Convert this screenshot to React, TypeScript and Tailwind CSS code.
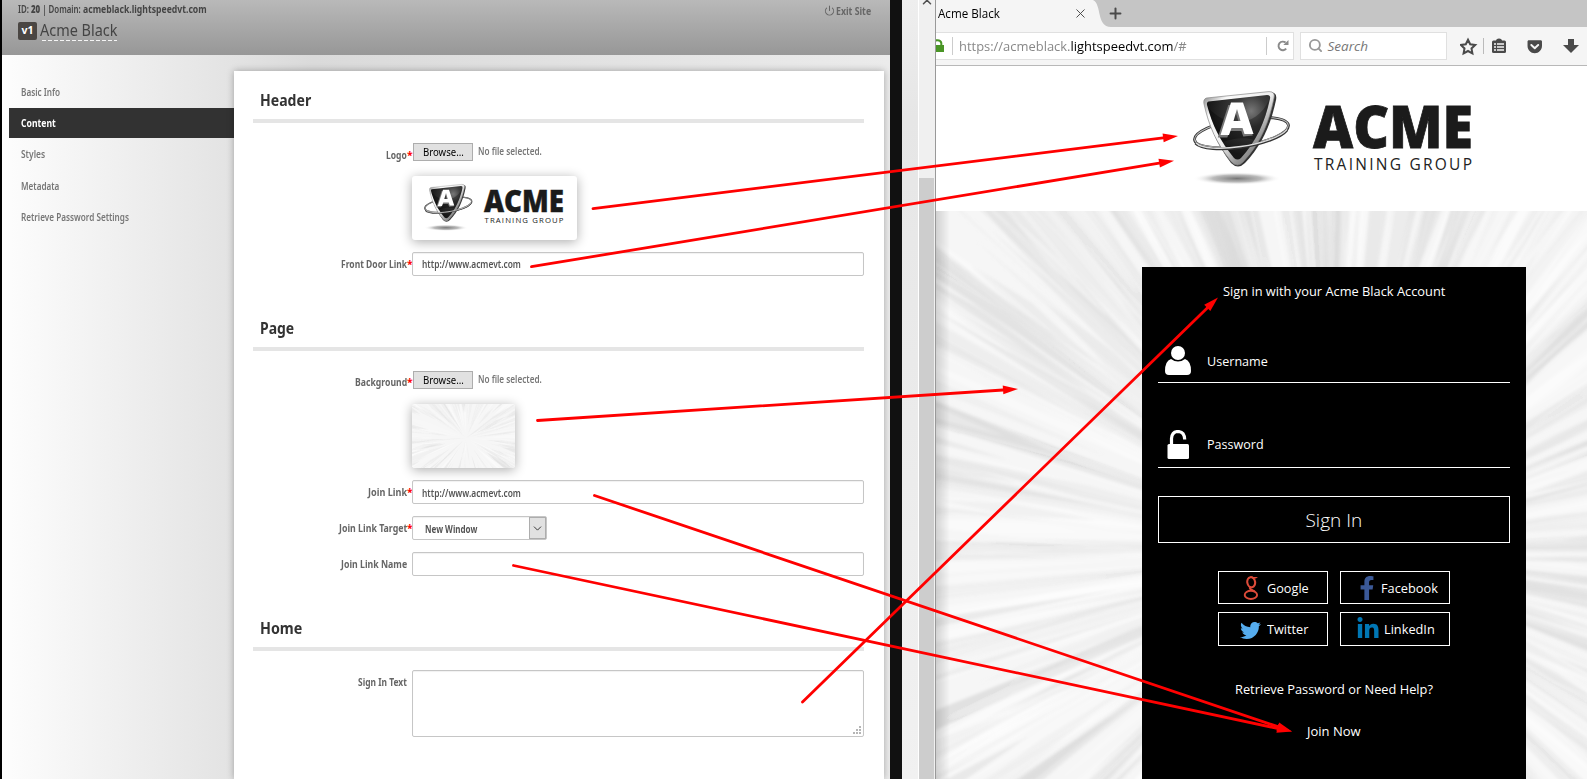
import { useLayoutEffect, useRef, useState, type ReactNode } from "react";
import { FaTwitter, FaFacebookF, FaLinkedinIn, FaGetPocket } from "react-icons/fa";
import { Power, Search, X, Plus, ChevronDown, ChevronUp } from "lucide-react";

/* Single line of text condensed or widened to an exact measure. */
function Fit({ w, className = "", children }: { w: number; className?: string; children: ReactNode }) {
  const ref = useRef<HTMLSpanElement>(null);
  const [k, setK] = useState(1);
  useLayoutEffect(() => {
    if (ref.current) setK(w / ref.current.offsetWidth);
  }, [w]);
  return (
    <span className={`inline-block whitespace-nowrap text-left ${className}`} style={{ width: w }}>
      <span ref={ref} className="inline-block origin-left" style={{ transform: `scaleX(${k})` }}>
        {children}
      </span>
    </span>
  );
}

function random(seed: number) {
  let s = seed;
  return () => {
    s = (s * 1664525 + 1013904223) % 4294967296;
    return s / 4294967296;
  };
}

const MAJOR: [number, number, number][] = [
  // angle (deg), width (deg), opacity
  [250, 6, 0.14], [256, 3, 0.08], [268.5, 5, 0.13], [262, 1.5, 0.06], [284, 3, 0.07], [293, 2, 0.06],
  [232, 3, 0.08], [225, 2, 0.08], [216, 3, 0.1], [209, 2, 0.06], [199, 3, 0.12], [190, 2, 0.07],
  [180, 3, 0.1], [174, 2, 0.06], [166, 1.5, 0.06], [157, 2.4, 0.12], [151, 2, 0.07], [143, 2, 0.09],
  [135, 4, 0.09], [306, 2, 0.07], [315, 4, 0.08], [328, 3, 0.07], [338, 3, 0.1], [346, 2, 0.09],
  [358, 3, 0.06], [10, 3, 0.09], [20, 3, 0.06], [32, 4, 0.06], [44, 3, 0.08], [55, 3, 0.07],
];

function Rays({ id, width, height, cx, cy, seed, fine }: {
  id: string; width: number; height: number; cx: number; cy: number; seed: number; fine?: boolean;
}) {
  const r = random(seed);
  const reach = Math.hypot(Math.max(cx, width - cx), Math.max(cy, height - cy)) + 20;
  const shapes: { d: string; dark: boolean; o: number }[] = [];
  const add = (deg: number, wd: number, r0: number, r1: number, dark: boolean, o: number) => {
    const a = (deg * Math.PI) / 180;
    const h = (wd * Math.PI) / 360;
    const p = (rad: number, an: number) => `${(cx + rad * Math.cos(an)).toFixed(1)} ${(cy + rad * Math.sin(an)).toFixed(1)}`;
    const m = r0 + (r1 - r0) * 0.55;
    shapes.push({ d: `M${p(r0, a)} L${p(m, a - h)} L${p(r1, a)} L${p(m, a + h)}Z`, dark, o });
  };
  const n = fine ? 260 : 620;
  for (let i = 0; i < n; i++) {
    const start = r() * reach * 0.7;
    const len = reach * (0.25 + r() * 0.6);
    add(r() * 360, fine ? 2 + r() * 5 : 0.5 + r() * 2.6, start, start + len, r() > 0.5, fine ? 0.1 + r() * 0.3 : 0.12 + r() * 0.34);
  }
  return (
    <svg width={width} height={height} className="block" aria-hidden>
      <defs>
        <filter id={id} x="0" y="0" width="100%" height="100%">
          <feGaussianBlur stdDeviation={fine ? 0.5 : 1.6} />
        </filter>
      </defs>
      <rect width={width} height={height} fill="#f6f6f6" />
      <g filter={`url(#${id})`}>
        {!fine && MAJOR.map(([deg, wd, o], i) => {
          const p = (rad: number, an: number) => `${cx + rad * Math.cos((an * Math.PI) / 180)} ${cy + rad * Math.sin((an * Math.PI) / 180)}`;
          return <path key={i} d={`M${cx} ${cy} L${p(reach, deg - wd / 2)} L${p(reach, deg + wd / 2)}Z`} fill="#000" opacity={o * 0.7} />;
        })}
        {shapes.map((s, i) => (
          <path key={i} d={s.d} fill={s.dark ? "#d8d8d8" : "#ffffff"} opacity={s.o} />
        ))}
      </g>
    </svg>
  );
}

function Logo({ id, className }: { id: string; className: string }) {
  return (
    <svg viewBox="0 0 290 110" className={className} role="img" aria-label="Acme Training Group">
      <defs>
        <linearGradient id={`${id}-rim`} x1="0" y1="0" x2="1" y2="1">
          <stop offset="0" stopColor="#777" />
          <stop offset=".2" stopColor="#fafafa" />
          <stop offset=".5" stopColor="#eee" />
          <stop offset=".7" stopColor="#999" />
          <stop offset="1" stopColor="#444" />
        </linearGradient>
        <radialGradient id={`${id}-face`} cx=".7" cy=".25" r=".7">
          <stop offset="0" stopColor="#777" />
          <stop offset=".35" stopColor="#3c3c3c" />
          <stop offset="1" stopColor="#161616" />
        </radialGradient>
        <radialGradient id={`${id}-shade`}>
          <stop offset="0" stopColor="#777" />
          <stop offset=".55" stopColor="#aaa" stopOpacity=".8" />
          <stop offset="1" stopColor="#fff" stopOpacity="0" />
        </radialGradient>
      </defs>
      <ellipse cx="47" cy="93.5" rx="44" ry="6.5" fill={`url(#${id}-shade)`} />
      <g transform="rotate(-9 51.5 47.5)" fill="none">
        <ellipse cx="51.5" cy="47.5" rx="47.5" ry="13.5" stroke="#333" strokeWidth="2.8" />
        <ellipse cx="51.5" cy="47.2" rx="47.3" ry="13.2" stroke="#bbb" strokeWidth="1.1" />
      </g>
      <path d="M17 14 L81 7.6 Q87.5 7.5 86 15 C81 39 72 60 55 78 Q48 85 41 78 C26 58 20 42 15 20 Q14 15 17 14Z" fill="#333" />
      <path d="M16.5 13 L79 6.6 Q85.5 6.5 84 13 C79 38 70 59 53 77 Q47.5 83 41.5 77 C26 58 19 41 14 19 Q13 14 16.5 13Z" fill={`url(#${id}-rim)`} stroke="#888" strokeWidth=".7" />
      <path d="M18.5 16.5 L77 10 Q81 10 80 14 C75 37 66 57 51 73 Q47.5 76 44 73 C30 56 22 39 17 20 Q16.5 17 18.5 16.5Z" fill={`url(#${id}-face)`} />
      <path d="M18 22 C22 38 28 50 33 57 C43 53 57 52 64 55 C72 43 77 27 79 15 C68 40 38 46 18 22Z" fill="#000" opacity=".3" />
      <path fillRule="evenodd" d="M29 51.5 L39.5 19 H53 L64 49.5 L54.5 50.5 L52.5 45 H41 L38.5 51.5Z M43 37.5 H50.5 L46.5 25.5Z" fill="#777" transform="translate(-1.2 1)" />
      <path fillRule="evenodd" d="M30.5 50 L41 17.5 H53 L63.5 49 H54.5 L52.5 43 H41.5 L39 50Z M43.5 36 H50.5 L47 24Z" fill="#fff" />
      <g transform="rotate(-9 51.5 47.5)" fill="none">
        <path d="M4.5 51 C14 65 82 66 97 52" stroke="#333" strokeWidth="2.8" />
        <path d="M5 50.7 C14 64.2 82 65.2 97 51.5" stroke="#ddd" strokeWidth="1.4" />
      </g>
      <text x="123" y="62.6" textLength="160" lengthAdjust="spacingAndGlyphs" className="fill-[#1b1b1b] font-['Open_Sans',sans-serif] text-[59px] font-extrabold" stroke="#1b1b1b" strokeWidth=".8">ACME</text>
      <text x="124" y="84.5" textLength="158" lengthAdjust="spacing" className="fill-[#222] font-['Open_Sans',sans-serif] text-[15.5px] font-medium">TRAINING GROUP</text>
    </svg>
  );
}

const field = "rounded-[2px] border border-[#c6c6c6] bg-white shadow-[inset_0_1px_1px_rgba(0,0,0,.06)]";

function Row({ label, w, required = true, className = "", offset = "pt-0", children }: {
  label: string; w: number; required?: boolean; className?: string; offset?: string; children: ReactNode;
}) {
  return (
    <div className={`flex ${className}`}>
      <div className={`flex w-[159px] justify-end text-[10.5px] leading-6 font-bold text-[#666] ${offset}`}>
        <Fit w={w}>{label}</Fit>
        <span className="w-[5px] text-[#f00]">{required ? "*" : ""}</span>
      </div>
      <div className="ml-[-1px] flex-1 pl-[1px]">{children}</div>
    </div>
  );
}

function Section({ title, w, gap, children }: { title: string; w: number; gap: string; children: ReactNode }) {
  return (
    <section>
      <h2 className={`flex h-[30px] pl-[7px] text-[16px] leading-[22px] font-bold text-[#333] ${gap}`}>
        <Fit w={w}>{title}</Fit>
      </h2>
      <div className="h-1 w-[611px] bg-[#e5e5e5]" />
      {children}
    </section>
  );
}

function FilePicker() {
  return (
    <div className="flex h-[18px] items-center pl-[1px]">
      <button className="flex h-[18px] w-[60px] items-center justify-center border border-[#adadad] bg-[#e1e1e1] text-[11px] text-black">
        <Fit w={41}>Browse...</Fit>
      </button>
      <Fit w={64} className="ml-[5px] text-[10.5px] font-semibold text-[#777]">No file selected.</Fit>
    </div>
  );
}

function Admin() {
  const nav: [string, number][] = [["Basic Info", 39], ["Content", 34.5], ["Styles", 24], ["Metadata", 38], ["Retrieve Password Settings", 108]];
  return (
    <div className="flex h-full w-[888px] flex-col overflow-hidden bg-linear-to-r from-[#fdfdfd] via-[#dadada] via-[35%] to-[#ebebeb]">
      <header className="flex h-[55px] shrink-0 justify-between bg-linear-to-b from-[#b9b9b9] to-[#979797] pr-[19px] pl-4 text-[#444]">
        <div>
          <div className="flex h-[19px] text-[10.5px] leading-[19px] font-semibold">
            <Fit w={63}>ID: <b>20</b> | Domain:</Fit>
            <Fit w={123.5} className="ml-[2px] font-bold">acmeblack.lightspeedvt.com</Fit>
          </div>
          <div className="mt-[3px] flex">
            <span className="flex h-[18px] w-[19px] items-center justify-center rounded-[2px] bg-[#4a4643] text-[10.5px] font-bold text-white">v1</span>
            <span className="ml-[3px] h-[19px] text-[16.5px] leading-[15px]"><Fit w={77}>Acme Black</Fit>
              <span className="ml-[2px] block h-px w-[75px] translate-y-[3px] bg-[repeating-linear-gradient(90deg,#f5f5f5_0_4px,transparent_4px_6px)]" />
            </span>
          </div>
        </div>
        <div className="flex h-[22px] items-center pt-[2px] text-[10.5px] font-bold text-[#666]">
          <Power size={11} strokeWidth={2.2} className="mr-[1px] -translate-y-[2px]" />
          <Fit w={35}>Exit Site</Fit>
        </div>
      </header>
      <div className="flex flex-1">
        <nav className="w-[232px] pt-[22px] pl-[7px] text-[10.5px] font-semibold text-[#777]">
          {nav.map(([name, w], i) => (
            <div key={name} className={i === 1 ? "mb-[1px] flex h-[30px] items-center bg-[#323232] pl-3 font-bold text-white" : "flex h-[31.4px] items-center pl-3"}>
              <Fit w={w}>{name}</Fit>
            </div>
          ))}
        </nav>
        <main className="mt-4 w-[650px] bg-white pt-[18px] pl-[19px] shadow-[0_0_7px_rgba(0,0,0,.3)]">
          <Section title="Header" w={51} gap="">
            <Row label="Logo" w={21} className="mt-5" offset="pt-[0px]">
              <FilePicker />
              <div className="mt-[15px] h-16 w-[165px] rounded-[3px] bg-white pt-[5px] pl-[10px] shadow-[0_2px_12px_rgba(0,0,0,.33)]">
                <Logo id="small" className="h-[55px] w-[146px]" />
              </div>
            </Row>
            <Row label="Front Door Link" w={66.5} className="mt-3">
              <div className={`${field} h-6 w-[452px] pl-[9px] text-[10.5px] leading-[23px] font-semibold text-[#555]`}><Fit w={99}>http://www.acmevt.com</Fit></div>
            </Row>
          </Section>
          <Section title="Page" w={34} gap="mt-[41px]">
            <Row label="Background" w={52} className="mt-5" offset="-mt-[1px]">
              <FilePicker />
              <div className="mt-[15px] h-16 w-[103px] overflow-hidden rounded-[3px] shadow-[0_2px_12px_rgba(0,0,0,.33)]">
                <Rays id="thumb-soft" width={103} height={64} cx={54} cy={34} seed={9} fine />
              </div>
            </Row>
            <Row label="Join Link" w={39} className="mt-3">
              <div className={`${field} h-6 w-[452px] pl-[9px] text-[10.5px] leading-[24px] font-semibold text-[#555]`}><Fit w={99}>http://www.acmevt.com</Fit></div>
            </Row>
            <Row label="Join Link Target" w={68} className="mt-3">
              <div className={`${field} flex h-6 w-[135px] justify-between pl-3 text-[10.5px] leading-[24px] font-bold text-[#555]`}>
                <Fit w={52}>New Window</Fit>
                <span className="flex h-[22px] w-[17px] items-center justify-center border border-[#adadad] bg-[#e1e1e1] text-[#333]"><ChevronDown size={13} strokeWidth={1.8} /></span>
              </div>
            </Row>
            <Row label="Join Link Name" w={66} required={false} className="mt-3">
              <div className={`${field} h-6 w-[452px]`} />
            </Row>
          </Section>
          <Section title="Home" w={42} gap="mt-[41px]">
            <Row label="Sign In Text" w={49} required={false} className="mt-[19px]">
              <div className={`${field} flex h-[67px] w-[452px] items-end justify-end p-[2px]`}>
                <svg width="8" height="8" className="fill-[#b5b5b5]"><path d="M6 0h2v2H6zM3 3h2v2H3zM6 3h2v2H6zM0 6h2v2H0zM3 6h2v2H3zM6 6h2v2H6z" /></svg>
              </div>
            </Row>
          </Section>
        </main>
      </div>
    </div>
  );
}

function GoogleMark() {
  return (
    <svg width="16" height="24" viewBox="0 0 16 24" fill="none" stroke="#dd4b39">
      <ellipse cx="8.2" cy="6.2" rx="3.9" ry="5.1" strokeWidth="2.1" transform="rotate(-10 8.2 6.2)" />
      <path d="M8 1 H15 L12.8 2.4 H9.5Z" fill="#dd4b39" stroke="none" />
      <path d="M7.3 11 C5.4 13 9.5 14.2 11.8 15.6" strokeWidth="2" />
      <ellipse cx="7.9" cy="18.9" rx="6.2" ry="4.1" strokeWidth="1.9" />
    </svg>
  );
}

function Social({ icon, label, w, className }: { icon: ReactNode; label: string; w: number; className: string }) {
  return (
    <button className={`flex w-[110px] items-center border border-white ${className}`}>
      {icon}
      <Fit w={w}>{label}</Fit>
    </button>
  );
}

function Field({ icon, label, w, className }: { icon: ReactNode; label: string; w: number; className: string }) {
  return (
    <div className={`flex items-center border-b border-white pl-[6px] ${className}`}>
      <span className="flex w-[43px] pl-[1px]">{icon}</span>
      <Fit w={w}>{label}</Fit>
    </div>
  );
}

function Browser() {
  return (
    <div className="flex h-full w-[651px] flex-col overflow-hidden font-['Open_Sans',sans-serif]">
      <div className="flex h-[27px] shrink-0 bg-[#c5c5c5]">
        <div className="flex w-[157px] items-center bg-[#f5f5f5] pl-[2px] text-[12px] text-black">
          <Fit w={62}>Acme Black</Fit>
          <X size={15} strokeWidth={1.5} className="ml-[73px] text-[#444]" />
        </div>
        <svg width="18" height="27" className="fill-[#f5f5f5]"><path d="M0 0C9 4 3 27 18 27H0Z" /></svg>
        <Plus size={17} strokeWidth={2.8} className="mt-[5px] -ml-[4px] text-[#4a4a4a]" />
      </div>
      <div className="flex h-[39px] shrink-0 items-start border-b border-[#b8b8b8] bg-[#f5f5f5] pt-[5px] text-[#444]">
        <div className="flex h-[28px] w-[365px] items-center border border-l-0 border-[#e0e0e0] bg-white text-[13.5px]">
          <svg width="8" height="14" viewBox="0 0 8 14" className="overflow-hidden"><path d="M-5 6H8V13H-5Z" fill="#4a9526" /><path d="M-1.8 7V4Q-1.8 1.2 1.5 1.2T5.3 4V7" stroke="#4a9526" strokeWidth="2" fill="none" /></svg>
          <span className="ml-2 h-[18px] w-px bg-[#ccc]" />
          <Fit w={228} className="ml-[6px] text-[#888]">https://acmeblack.<span className="text-black">lightspeedvt.com</span>/#</Fit>
          <span className="ml-[79px] h-[18px] w-px bg-[#ccc]" />
          <svg width="12" height="12" viewBox="0 0 12 12" className="ml-[10px]"><path d="M9.2 8.6A4.3 4.3 0 1 1 8.6 2.6" fill="none" stroke="#8a8a8a" strokeWidth="1.9" /><path d="M11.5 0V5H6.3Z" fill="#8a8a8a" /></svg>
        </div>
        <div className="ml-[6px] flex h-[28px] w-[150px] items-center border border-[#e0e0e0] bg-white pl-[7px] text-[13.5px] text-[#777] italic">
          <Search size={15} strokeWidth={3} className="mr-[5px] -translate-y-px text-[#999]" />
          <Fit w={40}>Search</Fit>
        </div>
        <svg width="130" height="28" className="ml-[13px]">
          <path d="M8 7.7l2.2 4.6 5 .7-3.7 3.4.9 5L8 19l-4.4 2.4.9-5L.8 13l5-.7z" fill="none" stroke="#4a4a4a" strokeWidth="2" />
          <path d="M23.5 6v16" stroke="#bbb" />
          <rect x="32" y="8.6" width="14" height="12.4" rx="1.5" fill="#4a4a4a" /><path d="M36 9a3 2.6 0 0 1 6 0z" fill="#4a4a4a" />
          <path d="M34 12h2M34 15h2M34 18h2M37 12h7M37 15h7M37 18h7" stroke="#f5f5f5" strokeWidth="1.4" />
          <path d="M108 7h6v6h5l-8 8-8-8h5z" fill="#4a4a4a" />
          <FaGetPocket x="66.5" y="6.2" size={16.5} color="#4a4a4a" />
        </svg>
      </div>
      <div className="h-[145px] shrink-0 bg-white pt-[19px] pl-[254px]"><Logo id="large" className="h-[110px] w-[290px]" /></div>
      <div className="relative h-[568px] shrink-0 overflow-hidden">
        <Rays id="page-soft" width={651} height={568} cx={398} cy={340} seed={31} />
        <div className="absolute top-0 left-0 h-full w-[14px] bg-linear-to-r from-black/15 to-transparent" />
        <div className="absolute top-[56px] left-[206px] flex h-[512px] w-[384px] flex-col bg-black px-4 text-[13px] leading-[18px] text-white">
          <div className="mt-[15px] flex justify-center"><Fit w={222}>Sign in with your Acme Black Account</Fit></div>
          <Field className="mt-[40px] h-[43px] pb-[1px]" label="Username" w={61} icon={
            <svg width="27" height="29" className="fill-white"><ellipse cx="13" cy="7" rx="7" ry="7" /><path d="M6 13Q13 18 20 13Q26 15 26 25Q26 29 22 29H4Q0 29 0 25Q0 15 6 13Z" /></svg>
          } />
          <Field className="mt-[42px] h-[43px] pb-1" label="Password" w={57} icon={
            <svg width="27" height="29"><rect x="2.5" y="14" width="21.5" height="15" rx="1.5" fill="#fff" /><path d="M6.5 15V8.5Q7 1.5 13.2 1.5Q19.5 2 19.7 9.5" fill="none" stroke="#fff" strokeWidth="3.2" /></svg>
          } />
          <button className="mt-[28px] flex h-[47px] shrink-0 items-center justify-center border border-white text-[19px] font-light"><Fit w={57}>Sign In</Fit></button>
          <div className="mt-[28px] flex flex-wrap gap-x-3 gap-y-2 pl-[60px]">
            <Social className="h-[33px] pl-[24px]" label="Google" w={42} icon={<span className="mr-[8px]"><GoogleMark /></span>} />
            <Social className="h-[33px] pl-[14px]" label="Facebook" w={57} icon={<FaFacebookF size={24} color="#3b5998" className="mr-[2px]" />} />
            <Social className="h-[34px] pl-[21px]" label="Twitter" w={41} icon={<FaTwitter size={21} color="#55acee" className="mr-[6px] translate-y-px" />} />
            <Social className="h-[34px] pl-[15px]" label="LinkedIn" w={51} icon={<FaLinkedinIn size={24} color="#0077b5" className="mr-[4px]" />} />
          </div>
          <div className="mt-[34px] flex justify-center"><Fit w={198}>Retrieve Password or Need Help?</Fit></div>
          <div className="mt-[24px] flex justify-center"><Fit w={54}>Join Now</Fit></div>
        </div>
      </div>
    </div>
  );
}

const ARROWS = [
  [593, 208.7, 1178, 136], [531.5, 266.7, 1174, 160.7], [537.5, 420.5, 1018, 389],
  [594.5, 495.5, 1292, 731.5], [513.5, 565.5, 1292, 731.5], [802.5, 702, 1218, 297.5],
];

function Arrows() {
  return (
    <svg className="pointer-events-none absolute inset-0" width="1587" height="779">
      {ARROWS.map(([x1, y1, x2, y2], i) => {
        const l = Math.hypot(x2 - x1, y2 - y1);
        const ux = (x2 - x1) / l;
        const uy = (y2 - y1) / l;
        const bx = x2 - ux * 15;
        const by = y2 - uy * 15;
        return (
          <g key={i} fill="#f00" stroke="#f00">
            <path d={`M${x1} ${y1}L${bx} ${by}`} strokeWidth="2.8" strokeLinecap="round" />
            <path d={`M${x2} ${y2}L${bx - uy * 4.4} ${by + ux * 4.4}L${bx + uy * 4.4} ${by - ux * 4.4}Z`} stroke="none" />
          </g>
        );
      })}
    </svg>
  );
}

export default function App() {
  return (
    <div className="relative flex h-[779px] w-[1587px] overflow-hidden bg-white font-['Noto_Sans',sans-serif]">
      <div className="w-[2px] bg-black" />
      <Admin />
      <div className="w-3 bg-[#111]" />
      <div className="w-4 bg-linear-to-b from-[#eee] via-[#e6e6e6] via-[15%] to-[#f1f1f1]" />
      <div className="flex w-[18px] flex-col border-r border-l border-r-[#999] border-l-white bg-[#f0f0f0]">
        <ChevronUp size={14} strokeWidth={2.6} className="-mt-[5px] ml-px h-[14px] text-[#505050]" />
        <div className="mt-[169px] w-[15px] flex-1 bg-[#cdcdcd]" />
      </div>
      <Browser />
      <Arrows />
    </div>
  );
}
